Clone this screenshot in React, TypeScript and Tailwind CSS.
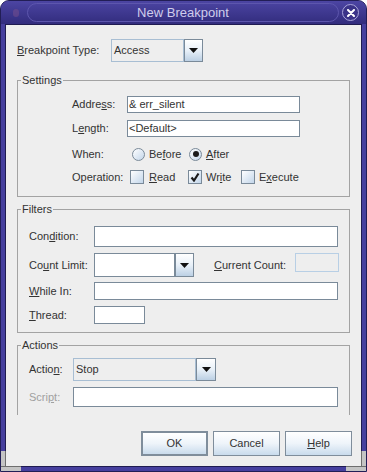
import React from 'react';

// Small helpers for the Swing "Ocean" look
const U = ({ children }: { children: React.ReactNode }) => (
  <span className="underline underline-offset-[1px] decoration-[1px]">{children}</span>
);

const Arrow = () => (
  <svg width="9" height="5" viewBox="0 0 9 5">
    <path d="M0 0h9L4.5 5z" fill="#111" />
  </svg>
);

type ComboProps = {
  text?: string;
  editable?: boolean;
  className: string;
  arrowClass: string;
};

const Combo = ({ text, editable, className, arrowClass }: ComboProps) => (
  <div className={`flex ${className}`}>
    <div
      className={`flex-1 flex items-center pl-[2px] border ${
        editable ? 'bg-white border-[#7a8a99]' : 'bg-[#eeeeee] border-[#a8bed3]'
      }`}
    >
      {text}
    </div>
    <div
      className={`${arrowClass} border border-[#7a8a99] bg-gradient-to-b from-white via-[#e8f0f8] to-[#bcd0e4] flex items-center justify-center`}
    >
      <Arrow />
    </div>
  </div>
);

const Radio = ({ checked }: { checked?: boolean }) => (
  <span className="w-[13px] h-[13px] rounded-full border border-[#7a8a99] bg-gradient-to-br from-white to-[#c3d6ea] flex items-center justify-center shrink-0">
    {checked && <span className="w-[6px] h-[6px] rounded-full bg-[#1a1a1a]" />}
  </span>
);

const Check = ({ checked }: { checked?: boolean }) => (
  <span className="w-[14px] h-[14px] border border-[#7a8a99] bg-gradient-to-br from-white to-[#c3d6ea] flex items-center justify-center shrink-0">
    {checked && (
      <svg width="10" height="10" viewBox="0 0 10 10">
        <path d="M1.5 5.5L4 8.5L8.5 1.5" stroke="#1a1a1a" strokeWidth="2.2" fill="none" />
      </svg>
    )}
  </span>
);

const Legend = ({ children }: { children: React.ReactNode }) => (
  <legend className="ml-[3px] px-[1px] leading-[14px] text-[#333333]">{children}</legend>
);

const Button = ({ children, primary }: { children: React.ReactNode; primary?: boolean }) => (
  <button
    className={`w-[67px] h-[25px] flex items-center justify-center bg-gradient-to-b from-white via-[#eef4fa] to-[#c9dbec] text-[#333333] ${
      primary ? 'border-2 border-[#7f8d9b]' : 'border border-[#7f8d9b]'
    }`}
  >
    {children}
  </button>
);

const App = () => {
  return (
    <div
      className="w-[367px] h-[472px] relative flex flex-col bg-[#463f9e] border border-[#221e56] rounded-t-[9px] overflow-hidden text-[11px] text-[#333333]"
      style={{ fontFamily: '"Liberation Sans", Arial, sans-serif' }}
    >
      {/* title bar */}
      <div className="h-[23px] flex items-center bg-gradient-to-b from-[#4c45a3] to-[#322c7d] shrink-0">
        <div className="w-[26px] h-full flex items-center justify-center">
          <span className="w-[6px] h-[8px] rounded-full bg-[#7a4f8c] opacity-50 ml-[3px]" />
        </div>
        <div className="w-[312px] h-[19px] rounded-full border border-[#5d56ad] flex items-center justify-center text-[13px] text-[#cfcdec]">
          New Breakpoint
        </div>
        <div className="ml-[3px] w-[17px] h-[17px] rounded-full border-[1.5px] border-[#aaa6da] bg-[#3a3388] flex items-center justify-center">
          <svg width="8" height="8" viewBox="0 0 8 8">
            <path d="M1 1L7 7M7 1L1 7" stroke="#ffffff" strokeWidth="2" strokeLinecap="round" />
          </svg>
        </div>
      </div>

      {/* body */}
      <div className="flex-1 px-[4px] pb-[4px] min-h-0">
        <div className="h-full border border-[#1f1b50] bg-[#eeeeee] overflow-hidden">
          {/* breakpoint type */}
          <div className="flex items-center pl-[11px] pt-[14px] h-[37px]">
            <span className="w-[94px]">
              <U>B</U>reakpoint Type:
            </span>
            <Combo text="Access" className="w-[92px] h-[23px]" arrowClass="w-[19px]" />
          </div>

          {/* Settings */}
          <fieldset className="ml-[11px] mt-[11px] w-[333px] border border-[#a3a3a3] p-0">
            <Legend>Settings</Legend>
            <div className="pl-[54px] pt-[9px] pb-[11px]">
              <div className="flex items-center h-[17px]">
                <span className="w-[55px]">
                  Addre<U>s</U>s:
                </span>
                <div className="w-[173px] h-[17px] bg-white border border-[#7a8a99] flex items-center pl-[1px]">
                  &amp; err_silent
                </div>
              </div>
              <div className="flex items-center h-[17px] mt-[7px]">
                <span className="w-[55px]">
                  L<U>e</U>ngth:
                </span>
                <div className="w-[173px] h-[17px] bg-white border border-[#7a8a99] flex items-center pl-[1px]">
                  &lt;Default&gt;
                </div>
              </div>
              <div className="flex items-center h-[16px] mt-[9px]">
                <span className="w-[55px]">When:</span>
                <div className="flex items-center w-[57px] ml-[5px] gap-[4px]">
                  <Radio />
                  <span>
                    Be<U>f</U>ore
                  </span>
                </div>
                <div className="flex items-center gap-[4px]">
                  <Radio checked />
                  <span>
                    <U>A</U>fter
                  </span>
                </div>
              </div>
              <div className="flex items-center h-[16px] mt-[7px]">
                <span className="w-[55px]">Operation:</span>
                <div className="flex items-center w-[58px] ml-[3px] gap-[5px]">
                  <Check />
                  <span>
                    <U>R</U>ead
                  </span>
                </div>
                <div className="flex items-center w-[53px] gap-[4px]">
                  <Check checked />
                  <span>
                    Wr<U>i</U>te
                  </span>
                </div>
                <div className="flex items-center gap-[4px]">
                  <Check />
                  <span>
                    E<U>x</U>ecute
                  </span>
                </div>
              </div>
            </div>
          </fieldset>

          {/* Filters */}
          <fieldset className="ml-[11px] mt-[5px] w-[333px] border border-[#a3a3a3] p-0">
            <Legend>Filters</Legend>
            <div className="pl-[11px] pt-[10px] pb-[8px]">
              <div className="flex items-center h-[21px]">
                <span className="w-[65px]">
                  Con<U>d</U>ition:
                </span>
                <div className="w-[244px] h-[21px] bg-white border border-[#7a8a99]" />
              </div>
              <div className="flex items-center h-[24px] mt-[6px]">
                <span className="w-[65px]">
                  Co<U>u</U>nt Limit:
                </span>
                <Combo editable className="w-[100px] h-[24px]" arrowClass="w-[19px]" />
                <span className="ml-[20px] w-[81px]">
                  <U>C</U>urrent Count:
                </span>
                <div className="w-[44px] h-[19px] self-start border border-[#b8cfe5] bg-[#eeeeee]" />
              </div>
              <div className="flex items-center h-[18px] mt-[5px]">
                <span className="w-[65px]">
                  <U>W</U>hile In:
                </span>
                <div className="w-[244px] h-[18px] bg-white border border-[#7a8a99]" />
              </div>
              <div className="flex items-center h-[18px] mt-[6px]">
                <span className="w-[65px]">
                  <U>T</U>hread:
                </span>
                <div className="w-[51px] h-[18px] bg-white border border-[#7a8a99]" />
              </div>
            </div>
          </fieldset>

          <fieldset className="ml-[11px] mt-[5px] w-[333px] border border-b-0 border-[#a3a3a3] p-0">
            <Legend>Actions</Legend>
            <div className="pl-[11px] pt-[6px] pb-[8px]">
              <div className="flex items-center h-[23px]">
                <span className="w-[44px]">
                  Actio<U>n</U>:
                </span>
                <Combo text="Stop" className="w-[143px] h-[23px]" arrowClass="w-[20px]" />
              </div>
              <div className="flex items-center h-[20px] mt-[6px]">
                <span className="w-[44px] text-[#a0a0a0]">
                  Scri<U>p</U>t:
                </span>
                <div className="w-[265px] h-[20px] bg-white border border-[#7a8a99]" />
              </div>
            </div>
          </fieldset>

          {/* buttons */}
          <div className="flex justify-end gap-[5px] pr-[9px] mt-[16px]">
            <Button primary>OK</Button>
            <Button>Cancel</Button>
            <Button>
              <U>H</U>elp
            </Button>
          </div>
        </div>
      </div>

      {/* resize grips in the bottom corners */}
      <div className="absolute left-0 bottom-0 w-[5px] h-[20px] bg-[#c4c4c4] border-r border-[#6e6e6e]" />
      <div className="absolute left-0 bottom-0 w-[20px] h-[5px] bg-[#c4c4c4] border-t border-[#6e6e6e]" />
      <div className="absolute right-0 bottom-0 w-[5px] h-[20px] bg-[#c4c4c4] border-l border-[#6e6e6e]" />
      <div className="absolute right-0 bottom-0 w-[20px] h-[5px] bg-[#c4c4c4] border-t border-[#6e6e6e]" />
    </div>
  );
};

export default App;
